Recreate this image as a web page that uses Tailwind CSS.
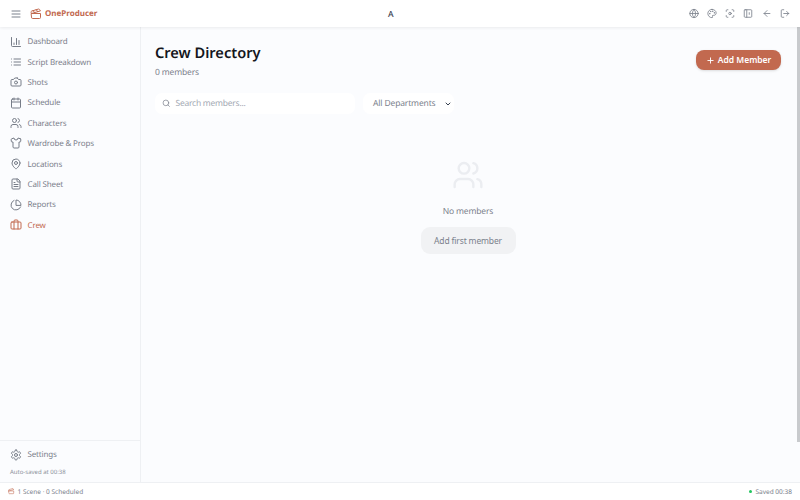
<!DOCTYPE html>
<html lang="en">
<head>
  <meta charset="UTF-8" />
  <title>OneProducer</title>
  <script src="https://cdn.jsdelivr.net/npm/@tailwindcss/browser@4"></script>
</head>
<body class="h-[500px] w-[800px] overflow-hidden bg-[#fbfcfe] font-['Noto_Sans',sans-serif] text-[#7b818c] [text-rendering:geometricPrecision]">
  <div class="flex h-full flex-col">

    <!-- Top bar -->
    <header class="relative z-10 flex h-[27px] shrink-0 items-center bg-white pl-[10px] pr-[10px] shadow-[0_1px_3px_rgba(0,0,0,0.07)]">
      <svg class="h-[12px] w-[12px] text-[#7b818c]" viewBox="0 0 24 24" fill="none" stroke="currentColor" stroke-width="2" stroke-linecap="round"><path d="M4 6h16M4 12h16M4 18h16"/></svg>
      <svg class="ml-[8px] h-[12px] w-[12px] text-[#c2694f]" viewBox="0 0 24 24" fill="none" stroke="currentColor" stroke-width="2" stroke-linecap="round" stroke-linejoin="round"><path d="M20.2 6 3 11l-.9-2.4c-.3-1.1.3-2.2 1.3-2.5l13.5-4c1.1-.3 2.2.3 2.5 1.3Z"/><path d="m6.2 5.3 3.1 3.9"/><path d="m12.4 3.4 3.1 4"/><path d="M3 11h18v8a2 2 0 0 1-2 2H5a2 2 0 0 1-2-2Z"/></svg>
      <span class="ml-[3px] w-[52px] pt-[1.5px] text-[8px] font-bold whitespace-nowrap text-[#c2694f]">OneProducer</span>
      <span class="ml-[291px] pt-[3px] text-[8.5px] font-medium text-[#374151]">A</span>
      <div class="ml-auto flex -translate-y-[0.5px] items-center gap-[8.3px] text-[#7b818c]">
        <svg class="h-[10px] w-[10px]" viewBox="0 0 24 24" fill="none" stroke="currentColor" stroke-width="2" stroke-linecap="round" stroke-linejoin="round"><circle cx="12" cy="12" r="10"/><path d="M12 2a14.5 14.5 0 0 0 0 20 14.5 14.5 0 0 0 0-20"/><path d="M2 12h20"/></svg>
        <svg class="h-[10px] w-[10px]" viewBox="0 0 24 24" fill="none" stroke="currentColor" stroke-width="2" stroke-linecap="round" stroke-linejoin="round"><circle cx="13.5" cy="6.5" r=".5" fill="currentColor"/><circle cx="17.5" cy="10.5" r=".5" fill="currentColor"/><circle cx="8.5" cy="7.5" r=".5" fill="currentColor"/><circle cx="6.5" cy="12.5" r=".5" fill="currentColor"/><path d="M12 2C6.5 2 2 6.5 2 12s4.5 10 10 10c.926 0 1.648-.746 1.648-1.688 0-.437-.18-.835-.437-1.125-.29-.289-.438-.652-.438-1.125a1.64 1.64 0 0 1 1.668-1.668h1.996c3.051 0 5.555-2.503 5.555-5.554C21.965 6.012 17.461 2 12 2z"/></svg>
        <svg class="h-[10px] w-[10px]" viewBox="0 0 24 24" fill="none" stroke="currentColor" stroke-width="2" stroke-linecap="round" stroke-linejoin="round"><path d="M3 7V5a2 2 0 0 1 2-2h2"/><path d="M17 3h2a2 2 0 0 1 2 2v2"/><path d="M21 17v2a2 2 0 0 1-2 2h-2"/><path d="M7 21H5a2 2 0 0 1-2-2v-2"/><circle cx="12" cy="12" r="3"/></svg>
        <svg class="h-[10px] w-[10px]" viewBox="0 0 24 24" fill="none" stroke="currentColor" stroke-width="2" stroke-linecap="round" stroke-linejoin="round"><rect x="3" y="3" width="18" height="18" rx="2"/><path d="M9 3v18"/><path d="M15 10v4"/></svg>
        <svg class="h-[10px] w-[10px]" viewBox="0 0 24 24" fill="none" stroke="currentColor" stroke-width="2" stroke-linecap="round" stroke-linejoin="round"><path d="m12 19-7-7 7-7"/><path d="M19 12H5"/></svg>
        <svg class="h-[10px] w-[10px]" viewBox="0 0 24 24" fill="none" stroke="currentColor" stroke-width="2" stroke-linecap="round" stroke-linejoin="round"><path d="M9 21H5a2 2 0 0 1-2-2V5a2 2 0 0 1 2-2h4"/><path d="m16 17 5-5-5-5"/><path d="M21 12H9"/></svg>
      </div>
    </header>

    <div class="flex min-h-0 flex-1">

      <!-- Sidebar -->
      <aside class="flex w-[141px] shrink-0 flex-col border-r border-[#eef0f3]">
        <nav class="flex flex-col gap-[0.4px] pl-[9.5px] pt-[4.5px] text-[8px] tracking-[-0.15px]">
          <a class="flex h-[20px] items-center gap-[6px]">
            <svg class="h-[12px] w-[12px] text-[#777d88]" viewBox="0 0 24 24" fill="none" stroke="currentColor" stroke-width="2" stroke-linecap="round" stroke-linejoin="round"><path d="M3 3v16a2 2 0 0 0 2 2h16"/><path d="M18 17V9"/><path d="M13 17V5"/><path d="M8 17v-3"/></svg>
            <span class="pt-[1.5px]">Dashboard</span>
          </a>
          <a class="flex h-[20px] items-center gap-[6px]">
            <svg class="h-[12px] w-[12px] text-[#777d88]" viewBox="0 0 24 24" fill="none" stroke="currentColor" stroke-width="2" stroke-linecap="round" stroke-linejoin="round"><path d="M3 12h.01"/><path d="M3 18h.01"/><path d="M3 6h.01"/><path d="M8 12h13"/><path d="M8 18h13"/><path d="M8 6h13"/></svg>
            <span class="pt-[1.5px]">Script Breakdown</span>
          </a>
          <a class="flex h-[20px] items-center gap-[6px]">
            <svg class="h-[12px] w-[12px] text-[#777d88]" viewBox="0 0 24 24" fill="none" stroke="currentColor" stroke-width="2" stroke-linecap="round" stroke-linejoin="round"><path d="M14.5 4h-5L7 7H4a2 2 0 0 0-2 2v9a2 2 0 0 0 2 2h16a2 2 0 0 0 2-2V9a2 2 0 0 0-2-2h-3l-2.5-3z"/><circle cx="12" cy="13" r="3"/></svg>
            <span class="pt-[1.5px]">Shots</span>
          </a>
          <a class="flex h-[20px] items-center gap-[6px]">
            <svg class="h-[12px] w-[12px] text-[#777d88]" viewBox="0 0 24 24" fill="none" stroke="currentColor" stroke-width="2" stroke-linecap="round" stroke-linejoin="round"><path d="M8 2v4"/><path d="M16 2v4"/><rect x="3" y="4" width="18" height="18" rx="2"/><path d="M3 10h18"/></svg>
            <span class="pt-[1.5px]">Schedule</span>
          </a>
          <a class="flex h-[20px] items-center gap-[6px]">
            <svg class="h-[12px] w-[12px] text-[#777d88]" viewBox="0 0 24 24" fill="none" stroke="currentColor" stroke-width="2" stroke-linecap="round" stroke-linejoin="round"><path d="M16 21v-2a4 4 0 0 0-4-4H6a4 4 0 0 0-4 4v2"/><circle cx="9" cy="7" r="4"/><path d="M22 21v-2a4 4 0 0 0-3-3.87"/><path d="M16 3.13a4 4 0 0 1 0 7.75"/></svg>
            <span class="pt-[1.5px]">Characters</span>
          </a>
          <a class="flex h-[20px] items-center gap-[6px]">
            <svg class="h-[12px] w-[12px] text-[#777d88]" viewBox="0 0 24 24" fill="none" stroke="currentColor" stroke-width="2" stroke-linecap="round" stroke-linejoin="round"><path d="M20.38 3.46 16 2a4 4 0 0 1-8 0L3.62 3.46a2 2 0 0 0-1.34 2.23l.58 3.47a1 1 0 0 0 .99.84H6v10c0 1.1.9 2 2 2h8a2 2 0 0 0 2-2V10h2.15a1 1 0 0 0 .99-.84l.58-3.47a2 2 0 0 0-1.34-2.23z"/></svg>
            <span class="pt-[1.5px]">Wardrobe &amp; Props</span>
          </a>
          <a class="flex h-[20px] items-center gap-[6px]">
            <svg class="h-[12px] w-[12px] text-[#777d88]" viewBox="0 0 24 24" fill="none" stroke="currentColor" stroke-width="2" stroke-linecap="round" stroke-linejoin="round"><path d="M20 10c0 6-8 12-8 12s-8-6-8-12a8 8 0 0 1 16 0Z"/><circle cx="12" cy="10" r="3"/></svg>
            <span class="pt-[1.5px]">Locations</span>
          </a>
          <a class="flex h-[20px] items-center gap-[6px]">
            <svg class="h-[12px] w-[12px] text-[#777d88]" viewBox="0 0 24 24" fill="none" stroke="currentColor" stroke-width="2" stroke-linecap="round" stroke-linejoin="round"><path d="M15 2H6a2 2 0 0 0-2 2v16a2 2 0 0 0 2 2h12a2 2 0 0 0 2-2V7Z"/><path d="M14 2v4a2 2 0 0 0 2 2h4"/><path d="M10 9H8"/><path d="M16 13H8"/><path d="M16 17H8"/></svg>
            <span class="pt-[1.5px]">Call Sheet</span>
          </a>
          <a class="flex h-[20px] items-center gap-[6px]">
            <svg class="h-[12px] w-[12px] text-[#777d88]" viewBox="0 0 24 24" fill="none" stroke="currentColor" stroke-width="2" stroke-linecap="round" stroke-linejoin="round"><path d="M21.21 15.89A10 10 0 1 1 8 2.83"/><path d="M22 12A10 10 0 0 0 12 2v10z"/></svg>
            <span class="pt-[1.5px]">Reports</span>
          </a>
          <a class="flex h-[20px] items-center gap-[6px] text-[#c2694f]">
            <svg class="h-[12px] w-[12px]" viewBox="0 0 24 24" fill="none" stroke="currentColor" stroke-width="2" stroke-linecap="round" stroke-linejoin="round"><path d="M16 20V4a2 2 0 0 0-2-2h-4a2 2 0 0 0-2 2v16"/><rect x="2" y="6" width="20" height="14" rx="2"/></svg>
            <span class="pt-[1.5px]">Crew</span>
          </a>
        </nav>
        <div class="mt-auto border-t border-[#eef0f3] pl-[9.5px]">
          <a class="mt-[3.5px] flex h-[20px] items-center gap-[6px] text-[8px] tracking-[-0.15px]">
            <svg class="h-[12px] w-[12px] text-[#777d88]" viewBox="0 0 24 24" fill="none" stroke="currentColor" stroke-width="2" stroke-linecap="round" stroke-linejoin="round"><path d="M12.22 2h-.44a2 2 0 0 0-2 2v.18a2 2 0 0 1-1 1.73l-.43.25a2 2 0 0 1-2 0l-.15-.08a2 2 0 0 0-2.73.73l-.22.38a2 2 0 0 0 .73 2.73l.15.1a2 2 0 0 1 1 1.72v.51a2 2 0 0 1-1 1.74l-.15.09a2 2 0 0 0-.73 2.73l.22.38a2 2 0 0 0 2.73.73l.15-.08a2 2 0 0 1 2 0l.43.25a2 2 0 0 1 1 1.73V20a2 2 0 0 0 2 2h.44a2 2 0 0 0 2-2v-.18a2 2 0 0 1 1-1.73l.43-.25a2 2 0 0 1 2 0l.15.08a2 2 0 0 0 2.73-.73l.22-.39a2 2 0 0 0-.73-2.73l-.15-.08a2 2 0 0 1-1-1.74v-.5a2 2 0 0 1 1-1.74l.15-.09a2 2 0 0 0 .73-2.73l-.22-.38a2 2 0 0 0-2.73-.73l-.15.08a2 2 0 0 1-2 0l-.43-.25a2 2 0 0 1-1-1.73V4a2 2 0 0 0-2-2z"/><circle cx="12" cy="12" r="3"/></svg>
            <span class="pt-[1.5px]">Settings</span>
          </a>
          <p class="h-[17.5px] pl-[0.5px] text-[6px] leading-[14px] text-[#8b919b]">Auto-saved at 00:38</p>
        </div>
      </aside>

      <!-- Main content -->
      <main class="relative min-w-0 flex-1 pl-[14px] pr-[19px] pt-[17px]">
        <div class="flex items-start justify-between">
          <div>
            <h1 class="text-[14.6px] leading-[18px] font-semibold text-[#14161c]">Crew Directory</h1>
            <p class="mt-[5px] text-[8.5px] leading-[12px] tracking-[-0.15px]">0 members</p>
          </div>
          <button class="mt-[6px] flex h-[20px] w-[85px] items-center justify-center gap-[3px] rounded-[8px] bg-[#c2694f] text-[8.5px] font-semibold text-white shadow-sm">
            <svg class="h-[9px] w-[9px]" viewBox="0 0 24 24" fill="none" stroke="currentColor" stroke-width="2.5" stroke-linecap="round"><path d="M5 12h14M12 5v14"/></svg>
            <span class="pt-[1px]">Add Member</span>
          </button>
        </div>

        <div class="mt-[14px] flex gap-[8px]">
          <div class="flex h-[21px] w-[200px] items-center gap-[5px] rounded-[7px] bg-white pl-[7px] text-[8.5px] tracking-[-0.25px] text-[#a3a9b3]">
            <svg class="h-[8.5px] w-[8.5px] text-[#7b818c]" viewBox="0 0 24 24" fill="none" stroke="currentColor" stroke-width="2" stroke-linecap="round"><path d="m21 21-4.3-4.3"/><circle cx="11" cy="11" r="8"/></svg>
            <span class="pt-[1.5px]">Search members...</span>
          </div>
          <div class="flex h-[21px] w-[91px] items-center justify-between rounded-[7px] bg-white pl-[10px] pr-[2px] text-[8.5px] tracking-[-0.15px] whitespace-nowrap">
            <span class="pt-[1.5px]">All Departments</span>
            <svg class="h-[8px] w-[8px] text-[#374151]" viewBox="0 0 24 24" fill="none" stroke="currentColor" stroke-width="3" stroke-linecap="round" stroke-linejoin="round"><path d="m6 9 6 6 6-6"/></svg>
          </div>
        </div>

        <div class="mt-[45px] flex flex-col items-center">
          <svg class="h-[32px] w-[32px] text-[#ebedf1]" viewBox="0 0 24 24" fill="none" stroke="currentColor" stroke-width="1.8" stroke-linecap="round" stroke-linejoin="round"><path d="M16 21v-2a4 4 0 0 0-4-4H6a4 4 0 0 0-4 4v2"/><circle cx="9" cy="7" r="4"/><path d="M22 21v-2a4 4 0 0 0-3-3.87"/><path d="M16 3.13a4 4 0 0 1 0 7.75"/></svg>
          <p class="mt-[15px] text-[8.5px] leading-[12px] tracking-[-0.15px]">No members</p>
          <button class="mt-[9px] h-[27px] w-[95px] rounded-[9px] bg-[#f1f2f4] pt-[1px] text-[8.5px] tracking-[-0.15px] text-[#7b818c]">Add first member</button>
        </div>

        <!-- Scrollbar thumb -->
        <div class="absolute right-0 top-0 h-[415px] w-[3.5px] bg-[#c8cacd]"></div>
      </main>
    </div>

    <!-- Status bar -->
    <footer class="flex h-[18px] shrink-0 items-center justify-between border-t border-[#eef0f3] bg-white pl-[8px] pr-[8px] text-[6.5px] text-[#7b818c]">
      <span class="flex items-center gap-[3px]">
        <svg class="h-[6.5px] w-[6.5px] text-[#c2694f]" viewBox="0 0 24 24" fill="none" stroke="currentColor" stroke-width="2" stroke-linecap="round" stroke-linejoin="round"><path d="M20.2 6 3 11l-.9-2.4c-.3-1.1.3-2.2 1.3-2.5l13.5-4c1.1-.3 2.2.3 2.5 1.3Z"/><path d="M3 11h18v8a2 2 0 0 1-2 2H5a2 2 0 0 1-2-2Z"/></svg>
        1 Scene · 0 Scheduled
      </span>
      <span class="flex items-center gap-[4px]">
        <i class="h-[3px] w-[3px] rounded-full bg-[#22c55e]"></i>
        Saved 00:38
      </span>
    </footer>
  </div>
</body>
</html>
